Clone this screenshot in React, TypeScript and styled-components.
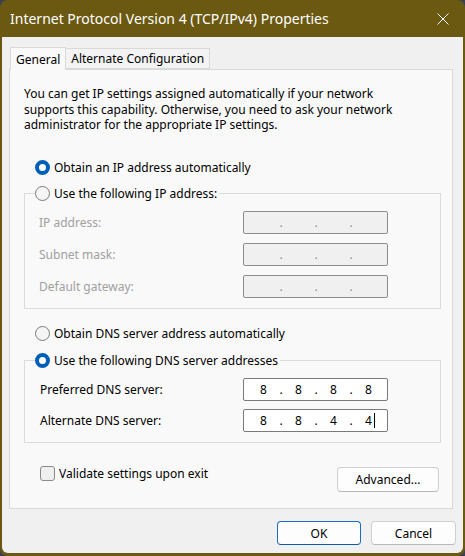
import React from "react";
import styled, { createGlobalStyle } from "styled-components";

const GlobalStyle = createGlobalStyle`
  html, body {
    margin: 0;
    padding: 0;
    background: #3a4250;
  }
  body {
    font-family: "Noto Sans", "Open Sans", sans-serif;
    font-size: 12px;
    color: #000;
  }
`;

const Window = styled.div`
  width: 465px;
  height: 556px;
  box-sizing: border-box;
  background: #6b5912;
  border-radius: 8px;
  padding: 0 2px 3px 2px;
  display: flex;
  flex-direction: column;
  overflow: hidden;
`;

const TitleBar = styled.div`
  height: 37px;
  flex-shrink: 0;
  display: flex;
  align-items: center;
  justify-content: space-between;
  padding: 0 14px 0 8px;
  color: #fff;
  font-size: 14px;
`;

const Body = styled.div`
  flex: 1;
  background: #f0f0f0;
  border-radius: 0 0 6px 6px;
  display: flex;
  flex-direction: column;
`;

const TabRow = styled.div`
  display: flex;
  align-items: flex-end;
  padding: 10px 0 0 8px;
  position: relative;
  z-index: 1;
`;

const Tab = styled.div<{ $active?: boolean }>`
  box-sizing: border-box;
  height: ${(p) => (p.$active ? "23px" : "21px")};
  padding: 0 5px;
  display: flex;
  align-items: center;
  border: 1px solid #d9d9d9;
  border-bottom: ${(p) => (p.$active ? "none" : "1px solid #d9d9d9")};
  border-left: ${(p) => (p.$active ? "1px solid #d9d9d9" : "none")};
  background: ${(p) => (p.$active ? "#f9f9f9" : "#f3f3f3")};
  margin-bottom: ${(p) => (p.$active ? "-1px" : "0")};
`;

const Panel = styled.div`
  box-sizing: border-box;
  width: 444px;
  height: 440px;
  margin-left: 7px;
  background: #f9f9f9;
  border: 1px solid #d9d9d9;
  padding: 16px 11px 0 14px;
  display: flex;
  flex-direction: column;
`;

const Intro = styled.p`
  margin: 0;
  line-height: 15.5px;
`;

const RadioRow = styled.label<{ $mt: number }>`
  display: flex;
  align-items: center;
  gap: 4px;
  height: 16px;
  margin: ${(p) => p.$mt}px 0 0 11px;
  white-space: nowrap;
`;

const RadioDot = styled.span<{ $checked?: boolean }>`
  box-sizing: border-box;
  width: 15px;
  height: 15px;
  border-radius: 50%;
  flex-shrink: 0;
  background: ${(p) => (p.$checked ? "#fff" : "#f5f5f5")};
  border: ${(p) => (p.$checked ? "4.5px solid #005fb8" : "1px solid #7a7a7a")};
`;

const Group = styled.fieldset<{ $mt: number }>`
  margin: ${(p) => p.$mt}px 0 0 0;
  border: 1px solid #dcdcdc;
  padding: 9px 0 10px 10px;
  min-width: 0;
`;

const Legend = styled.legend`
  padding: 0 2px 0 0;
  margin: 0;
  display: flex;
  align-items: center;
  gap: 4px;
  height: 16px;
  white-space: nowrap;
`;

const FieldGrid = styled.div<{ $gap: number; $indent: number }>`
  display: grid;
  grid-template-columns: ${(p) => 208 - p.$indent}px 145px;
  row-gap: ${(p) => p.$gap}px;
  align-items: center;
  padding-left: ${(p) => p.$indent}px;
`;

const FieldLabel = styled.span<{ $disabled?: boolean }>`
  color: ${(p) => (p.$disabled ? "#a0a0a0" : "#000")};
`;

const IpBox = styled.div<{ $disabled?: boolean }>`
  box-sizing: border-box;
  height: 23px;
  border: 1px solid ${(p) => (p.$disabled ? "#8c8c8c" : "#7a7a7a")};
  border-radius: 2px;
  background: ${(p) => (p.$disabled ? "#f0f0f0" : "#fff")};
  display: flex;
  align-items: center;
  padding-left: 4px;
  color: ${(p) => (p.$disabled ? "#8c8c8c" : "#000")};
`;

const Octet = styled.span`
  width: 31px;
  text-align: center;
  position: relative;
`;

const Dot = styled.span`
  width: 4px;
  text-align: center;
`;

const Caret = styled.span`
  position: absolute;
  top: 1px;
  right: 9px;
  width: 1px;
  height: 15px;
  background: #000;
`;

const BottomRow = styled.div`
  display: flex;
  justify-content: space-between;
  align-items: flex-start;
  margin: 24px 2px 0 16px;
`;

const CheckRow = styled.label`
  display: flex;
  align-items: center;
  gap: 4px;
  height: 14px;
`;

const CheckBox = styled.span`
  box-sizing: border-box;
  width: 15px;
  height: 15px;
  border: 1px solid #8a8a8a;
  border-radius: 3px;
  background: #efefef;
`;

const Button = styled.button<{ $primary?: boolean; $w: number }>`
  box-sizing: border-box;
  width: ${(p) => p.$w}px;
  height: ${(p) => (p.$primary !== undefined ? 24 : 25)}px;
  font-family: inherit;
  font-size: 12px;
  color: #000;
  background: #fdfdfd;
  border: 1px solid ${(p) => (p.$primary ? "#1a6cbd" : "#d0d0d0")};
  border-bottom-color: ${(p) => (p.$primary ? "#0f5aa5" : "#b8b8b8")};
  border-radius: 4px;
  padding: 0;
`;

const Footer = styled.div`
  display: flex;
  justify-content: flex-end;
  gap: 10px;
  padding: 12px 7px 0 0;
`;

function IpField({ values, disabled, caret }: { values: string[]; disabled?: boolean; caret?: boolean }) {
  return (
    <IpBox $disabled={disabled}>
      {values.map((v, i) => (
        <React.Fragment key={i}>
          {i > 0 && <Dot>.</Dot>}
          <Octet>
            {v}
            {caret && i === 3 && <Caret />}
          </Octet>
        </React.Fragment>
      ))}
    </IpBox>
  );
}

export default function App() {
  const empty = ["", "", "", ""];
  return (
    <>
      <GlobalStyle />
      <Window>
        <TitleBar>
          <span>Internet Protocol Version 4 (TCP/IPv4) Properties</span>
          <svg width="12" height="12" viewBox="0 0 12 12">
            <path d="M0.5 0.5 L11.5 11.5 M11.5 0.5 L0.5 11.5" stroke="#fff" strokeWidth="1" fill="none" />
          </svg>
        </TitleBar>
        <Body>
          <TabRow>
            <Tab $active>General</Tab>
            <Tab>Alternate Configuration</Tab>
          </TabRow>
          <Panel>
            <Intro>
              You can get IP settings assigned automatically if your network
              <br />
              supports this capability. Otherwise, you need to ask your network
              <br />
              administrator for the appropriate IP settings.
            </Intro>

            <RadioRow $mt={27}>
              <RadioDot $checked />
              Obtain an IP address automatically
            </RadioRow>

            <Group $mt={10}>
              <Legend>
                <RadioDot />
                Use the following IP address:
              </Legend>
              <FieldGrid $gap={9} $indent={4}>
                <FieldLabel $disabled>IP address:</FieldLabel>
                <IpField values={empty} disabled />
                <FieldLabel $disabled>Subnet mask:</FieldLabel>
                <IpField values={empty} disabled />
                <FieldLabel $disabled>Default gateway:</FieldLabel>
                <IpField values={empty} disabled />
              </FieldGrid>
            </Group>

            <RadioRow $mt={17}>
              <RadioDot />
              Obtain DNS server address automatically
            </RadioRow>

            <Group $mt={11}>
              <Legend>
                <RadioDot $checked />
                Use the following DNS server addresses
              </Legend>
              <FieldGrid $gap={8} $indent={5}>
                <FieldLabel>Preferred DNS server:</FieldLabel>
                <IpField values={["8", "8", "8", "8"]} />
                <FieldLabel>Alternate DNS server:</FieldLabel>
                <IpField values={["8", "8", "4", "4"]} caret />
              </FieldGrid>
            </Group>

            <BottomRow>
              <CheckRow>
                <CheckBox />
                Validate settings upon exit
              </CheckRow>
              <Button $w={102}>Advanced...</Button>
            </BottomRow>
          </Panel>
          <Footer>
            <Button $primary $w={84}>OK</Button>
            <Button $primary={false} $w={85}>Cancel</Button>
          </Footer>
        </Body>
      </Window>
    </>
  );
}
